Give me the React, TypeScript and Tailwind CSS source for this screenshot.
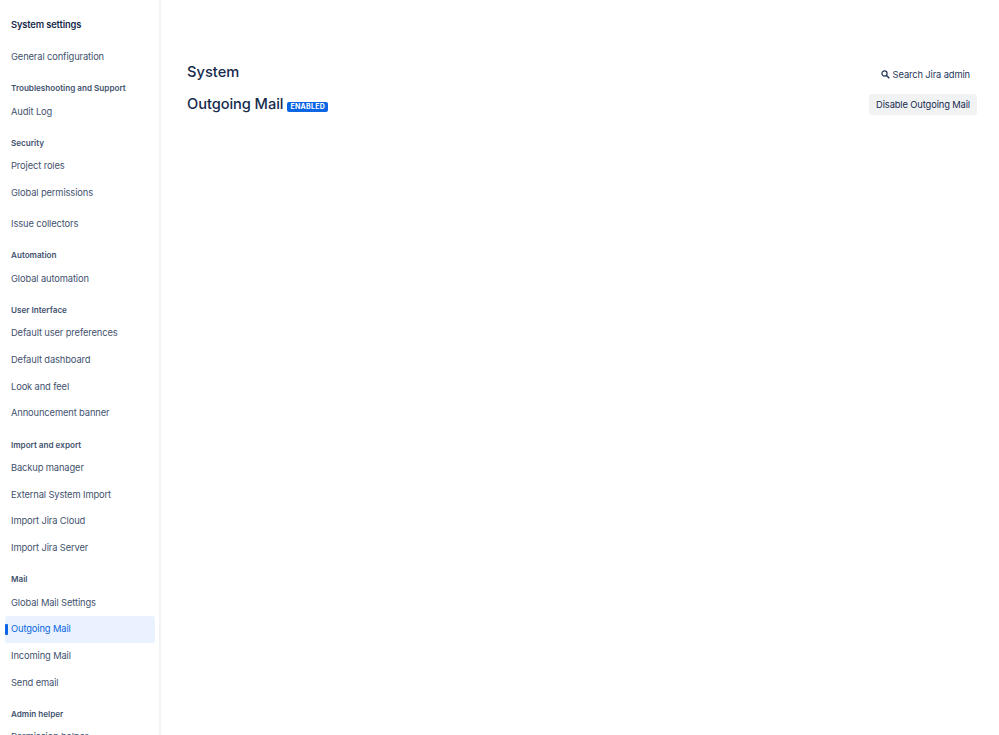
const sections = [
  { items: ["General configuration"] },
  { title: "Troubleshooting and Support", items: ["Audit Log"] },
  { title: "Security", items: ["Project roles", "Global permissions", "Issue collectors"] },
  { title: "Automation", items: ["Global automation"] },
  {
    title: "User Interface",
    items: ["Default user preferences", "Default dashboard", "Look and feel", "Announcement banner"],
  },
  {
    title: "Import and export",
    items: ["Backup manager", "External System Import", "Import Jira Cloud", "Import Jira Server"],
  },
  { title: "Mail", items: ["Global Mail Settings", "Outgoing Mail", "Incoming Mail", "Send email"] },
  { title: "Admin helper", items: ["Permission helper"] },
];

function SearchIcon() {
  return (
    <svg width="9" height="9" viewBox="0 0 9 9" fill="none" className="text-[#253858]">
      <circle cx="3.5" cy="3.5" r="2.6" stroke="currentColor" strokeWidth="1.2" />
      <path d="M5.5 5.5L8.3 8.3" stroke="currentColor" strokeWidth="1.5" />
    </svg>
  );
}

export default function App() {
  return (
    <div className="flex h-[735px] overflow-hidden bg-white font-['Inter',sans-serif] text-[#172b4d]">
      {/* Sidebar */}
      <nav className="h-full w-[161px] shrink-0 overflow-hidden border-r-2 border-[#f2f3f6] pl-[5px] pr-[4px]">
        <div className="px-[6px] pt-[18px] pb-[12.7px] text-[9.33px] leading-[13px] font-semibold tracking-[-0.13px] text-[#172b4d]">
          System settings
        </div>
        {sections.map((section, i) => (
          <div key={i} className="mb-[11px]">
            {section.title && (
              <div className="px-[6px] pt-[1px] pb-[4px] text-[8.15px] leading-[12px] font-semibold text-[#42526e]">
                {section.title}
              </div>
            )}
            {section.items.map((item) => {
              const active = item === "Outgoing Mail";
              return (
                <div
                  key={item}
                  className={
                    active
                      ? "relative flex h-[26.67px] items-center rounded-[3px] bg-[#e9f2fe] px-[6px] text-[9.33px] tracking-[-0.12px] text-[#0c66e4]"
                      : item === "Issue collectors"
                        ? "mt-[4.33px] flex h-[26.67px] items-center px-[6px] text-[9.33px] tracking-[-0.12px] text-[#42526e]"
                        : "flex h-[26.67px] items-center px-[6px] text-[9.33px] tracking-[-0.12px] text-[#42526e]"
                  }
                >
                  {active && (
                    <span className="absolute top-[8px] left-0 h-[11px] w-[3px] rounded-[1px] bg-[#0c66e4]" />
                  )}
                  {item}
                </div>
              );
            })}
          </div>
        ))}
      </nav>

      {/* Main content */}
      <main className="flex-1 pt-[62px] pr-[22px] pl-[26px]">
        <div className="flex items-center justify-between">
          <h1 className="text-[14.67px] leading-[21px] font-medium text-[#172b4d]">System</h1>
          <div className="mt-[4px] flex items-center gap-[3px] pr-[7px] text-[9.33px] tracking-[-0.12px] text-[#253858]">
            <SearchIcon />
            Search Jira admin
          </div>
        </div>
        <div className="mt-[11px] flex items-center justify-between">
          <div className="flex items-center gap-[4px]">
            <h2 className="text-[14.67px] leading-[21px] font-medium tracking-[-0.08px] text-[#172b4d]">Outgoing Mail</h2>
            <span className="mt-[5px] rounded-[2px] bg-[#0c66e4] px-[3px] text-[7px] leading-[10px] font-bold tracking-[0.3px] text-white">
              ENABLED
            </span>
          </div>
          <button className="h-[21px] rounded-[3px] bg-[#f1f2f4] px-[7px] text-[9.33px] tracking-[-0.12px] text-[#172b4d]">
            Disable Outgoing Mail
          </button>
        </div>
      </main>
    </div>
  );
}
